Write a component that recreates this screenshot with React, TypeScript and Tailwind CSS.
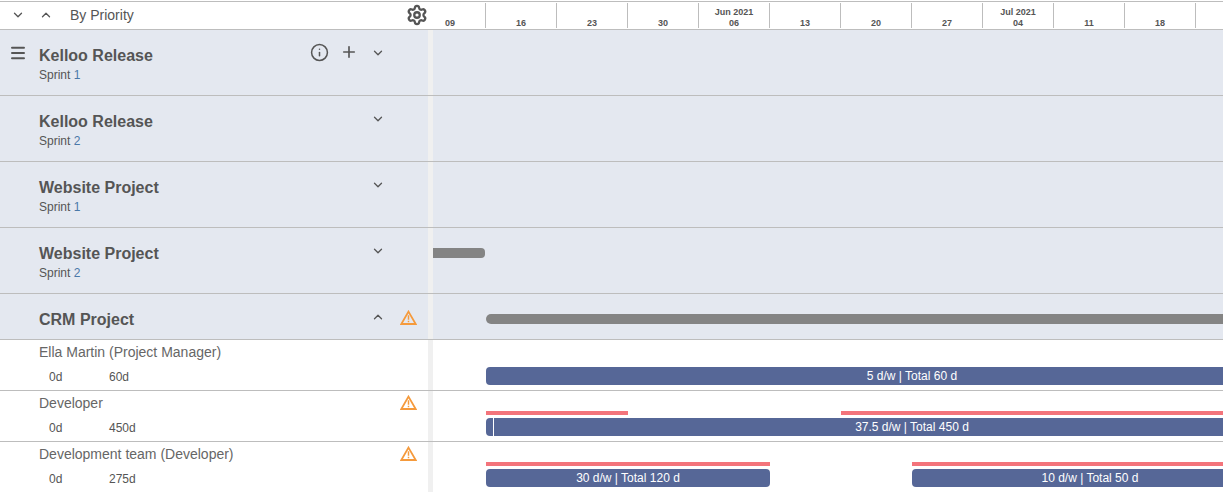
import { ChevronDown, ChevronUp, Info, Menu, Plus, Settings } from "lucide-react";

const weeks = [
  { day: "09" },
  { day: "16" },
  { day: "23" },
  { day: "30" },
  { day: "06", month: "Jun 2021" },
  { day: "13" },
  { day: "20" },
  { day: "27" },
  { day: "04", month: "Jul 2021" },
  { day: "11" },
  { day: "18" },
  { day: "" },
];

const Warn = () => (
  <svg width="17" height="15" viewBox="0 0 17 15" className="block">
    <path d="M8.5 1.6 15.7 14H1.3Z" fill="none" stroke="#f59a3c" strokeWidth="1.8" />
    <path d="M8.5 5.2v4.6M8.5 10.8v1.4" fill="none" stroke="#f59a3c" strokeWidth="1.5" />
  </svg>
);

const SprintRow = ({ title, sprint, first, warn, up, children }: any) => (
  <div className={`flex border-b border-[#bdbdbd] bg-[#e4e8f0] ${sprint ? "h-[66px]" : "h-[46px]"}`}>
    <div className="relative flex w-[428px] shrink-0">
      <div className="w-[39px] shrink-0 pl-[9px] pt-[14px]">
        {first && <Menu size={18} strokeWidth={2.6} className="text-[#555]" />}
      </div>
      <div className="pt-[15px]">
        <div className="text-[16px] leading-[22px] font-bold text-[#555]">{title}</div>
        {sprint && (
          <div className="text-[12px] leading-[16px] text-[#555]">
            Sprint <span className="text-[#4a78a8]">{sprint}</span>
          </div>
        )}
      </div>
      <div className="ml-auto flex items-start pt-[13px] pr-[43px]">
        {first && (
          <>
            <Info size={19} strokeWidth={1.9} className="mr-[11px] text-[#555]" />
            <Plus size={18} strokeWidth={2.2} className="mr-[13px] text-[#555]" />
          </>
        )}
        {up ? (
          <ChevronUp size={14} strokeWidth={2.25} className="mt-[3px] text-[#555]" />
        ) : (
          <ChevronDown size={14} strokeWidth={2.25} className="mt-[3px] text-[#555]" />
        )}
      </div>
      {warn && (
        <div className="absolute right-[11px] top-[16px]">
          <Warn />
        </div>
      )}
    </div>
    <div className="w-[5px] shrink-0 bg-[#f0f0f0]" />
    <div className="min-w-0 flex-1">{children}</div>
  </div>
);

const ResourceRow = ({ name, a, b, warn, last, children }: any) => (
  <div className={`flex h-[51px] bg-white ${last ? "" : "border-b border-[#bdbdbd]"}`}>
    <div className="relative w-[428px] shrink-0 pl-[39px] pt-[3px]">
      <div className="text-[14px] leading-[18px] text-[#666]">{name}</div>
      <div className="mt-[8px] flex text-[12px] leading-[16px] text-[#555]">
        <span className="ml-[10px] w-[60px]">{a}</span>
        <span>{b}</span>
      </div>
      {warn && (
        <div className="absolute right-[11px] top-[4px]">
          <Warn />
        </div>
      )}
    </div>
    <div className="w-[5px] shrink-0 bg-[#f0f0f0]" />
    <div className="min-w-0 flex-1 overflow-hidden">{children}</div>
  </div>
);

const Bar = ({ className, label }: { className: string; label: string }) => (
  <div className={`flex h-[18px] shrink-0 items-center justify-center rounded-[4px] bg-[#566797] text-[12px] text-white ${className}`}>
    {label}
  </div>
);

export default function App() {
  return (
    <div className="h-[492px] w-[1223px] overflow-hidden bg-white font-['Liberation_Sans',Arial,sans-serif]">
      <div className="mt-px flex h-[29px] border-y border-[#bdbdbd]">
        <div className="flex w-[415px] shrink-0 items-center pb-[1px]">
          <ChevronDown size={14} strokeWidth={2.25} className="ml-[11px] shrink-0 text-[#555]" />
          <ChevronUp size={14} strokeWidth={2.25} className="ml-[14px] shrink-0 text-[#555]" />
          <span className="ml-[17px] w-[66px] shrink-0 whitespace-nowrap text-[14px] text-[#555]">By Priority</span>
          <Settings size={22} strokeWidth={2.5} className="ml-[270px] shrink-0 text-[#555]" />
        </div>
        <div className="flex min-w-0 flex-1 pt-[1px]">
          {weeks.map((w, i) => (
            <div
              key={i}
              className="flex h-[25px] w-[71px] shrink-0 flex-col items-center justify-end border-r border-[#bdbdbd] text-[9px] leading-[10px] font-bold text-[#555]"
            >
              {w.month && <span className="mb-[1px]">{w.month}</span>}
              <span>{w.day}</span>
            </div>
          ))}
        </div>
      </div>

      <SprintRow title="Kelloo Release" sprint="1" first />
      <SprintRow title="Kelloo Release" sprint="2" />
      <SprintRow title="Website Project" sprint="1" />
      <SprintRow title="Website Project" sprint="2">
        <div className="mt-[20px] h-[10px] w-[52px] rounded-r-[4px] bg-[#848484]" />
      </SprintRow>
      <SprintRow title="CRM Project" up warn>
        <div className="mt-[20px] ml-[53px] h-[10px] rounded-l-[5px] bg-[#848484]" />
      </SprintRow>

      <ResourceRow name="Ella Martin (Project Manager)" a="0d" b="60d">
        <div className="flex">
          <Bar className="mt-[27px] ml-[53px] w-[852px]" label="5 d/w | Total 60 d" />
        </div>
      </ResourceRow>
      <ResourceRow name="Developer" a="0d" b="450d" warn>
        <div className="mt-[20px] flex h-[4px]">
          <div className="ml-[53px] w-[142px] bg-[#f3747b]" />
          <div className="ml-[213px] flex-1 bg-[#f3747b]" />
        </div>
        <div className="relative mt-[3px] ml-[53px] w-[852px]">
          <Bar className="" label="37.5 d/w | Total 450 d" />
          <div className="absolute top-0 left-[7px] h-[18px] w-px bg-white" />
        </div>
      </ResourceRow>
      <ResourceRow name="Development team (Developer)" a="0d" b="275d" warn last>
        <div className="mt-[20px] flex h-[4px]">
          <div className="ml-[53px] w-[284px] bg-[#f3747b]" />
          <div className="ml-[142px] flex-1 bg-[#f3747b]" />
        </div>
        <div className="mt-[3px] flex">
          <Bar className="ml-[53px] w-[284px]" label="30 d/w | Total 120 d" />
          <Bar className="ml-[142px] w-[356px]" label="10 d/w | Total 50 d" />
        </div>
      </ResourceRow>
    </div>
  );
}
